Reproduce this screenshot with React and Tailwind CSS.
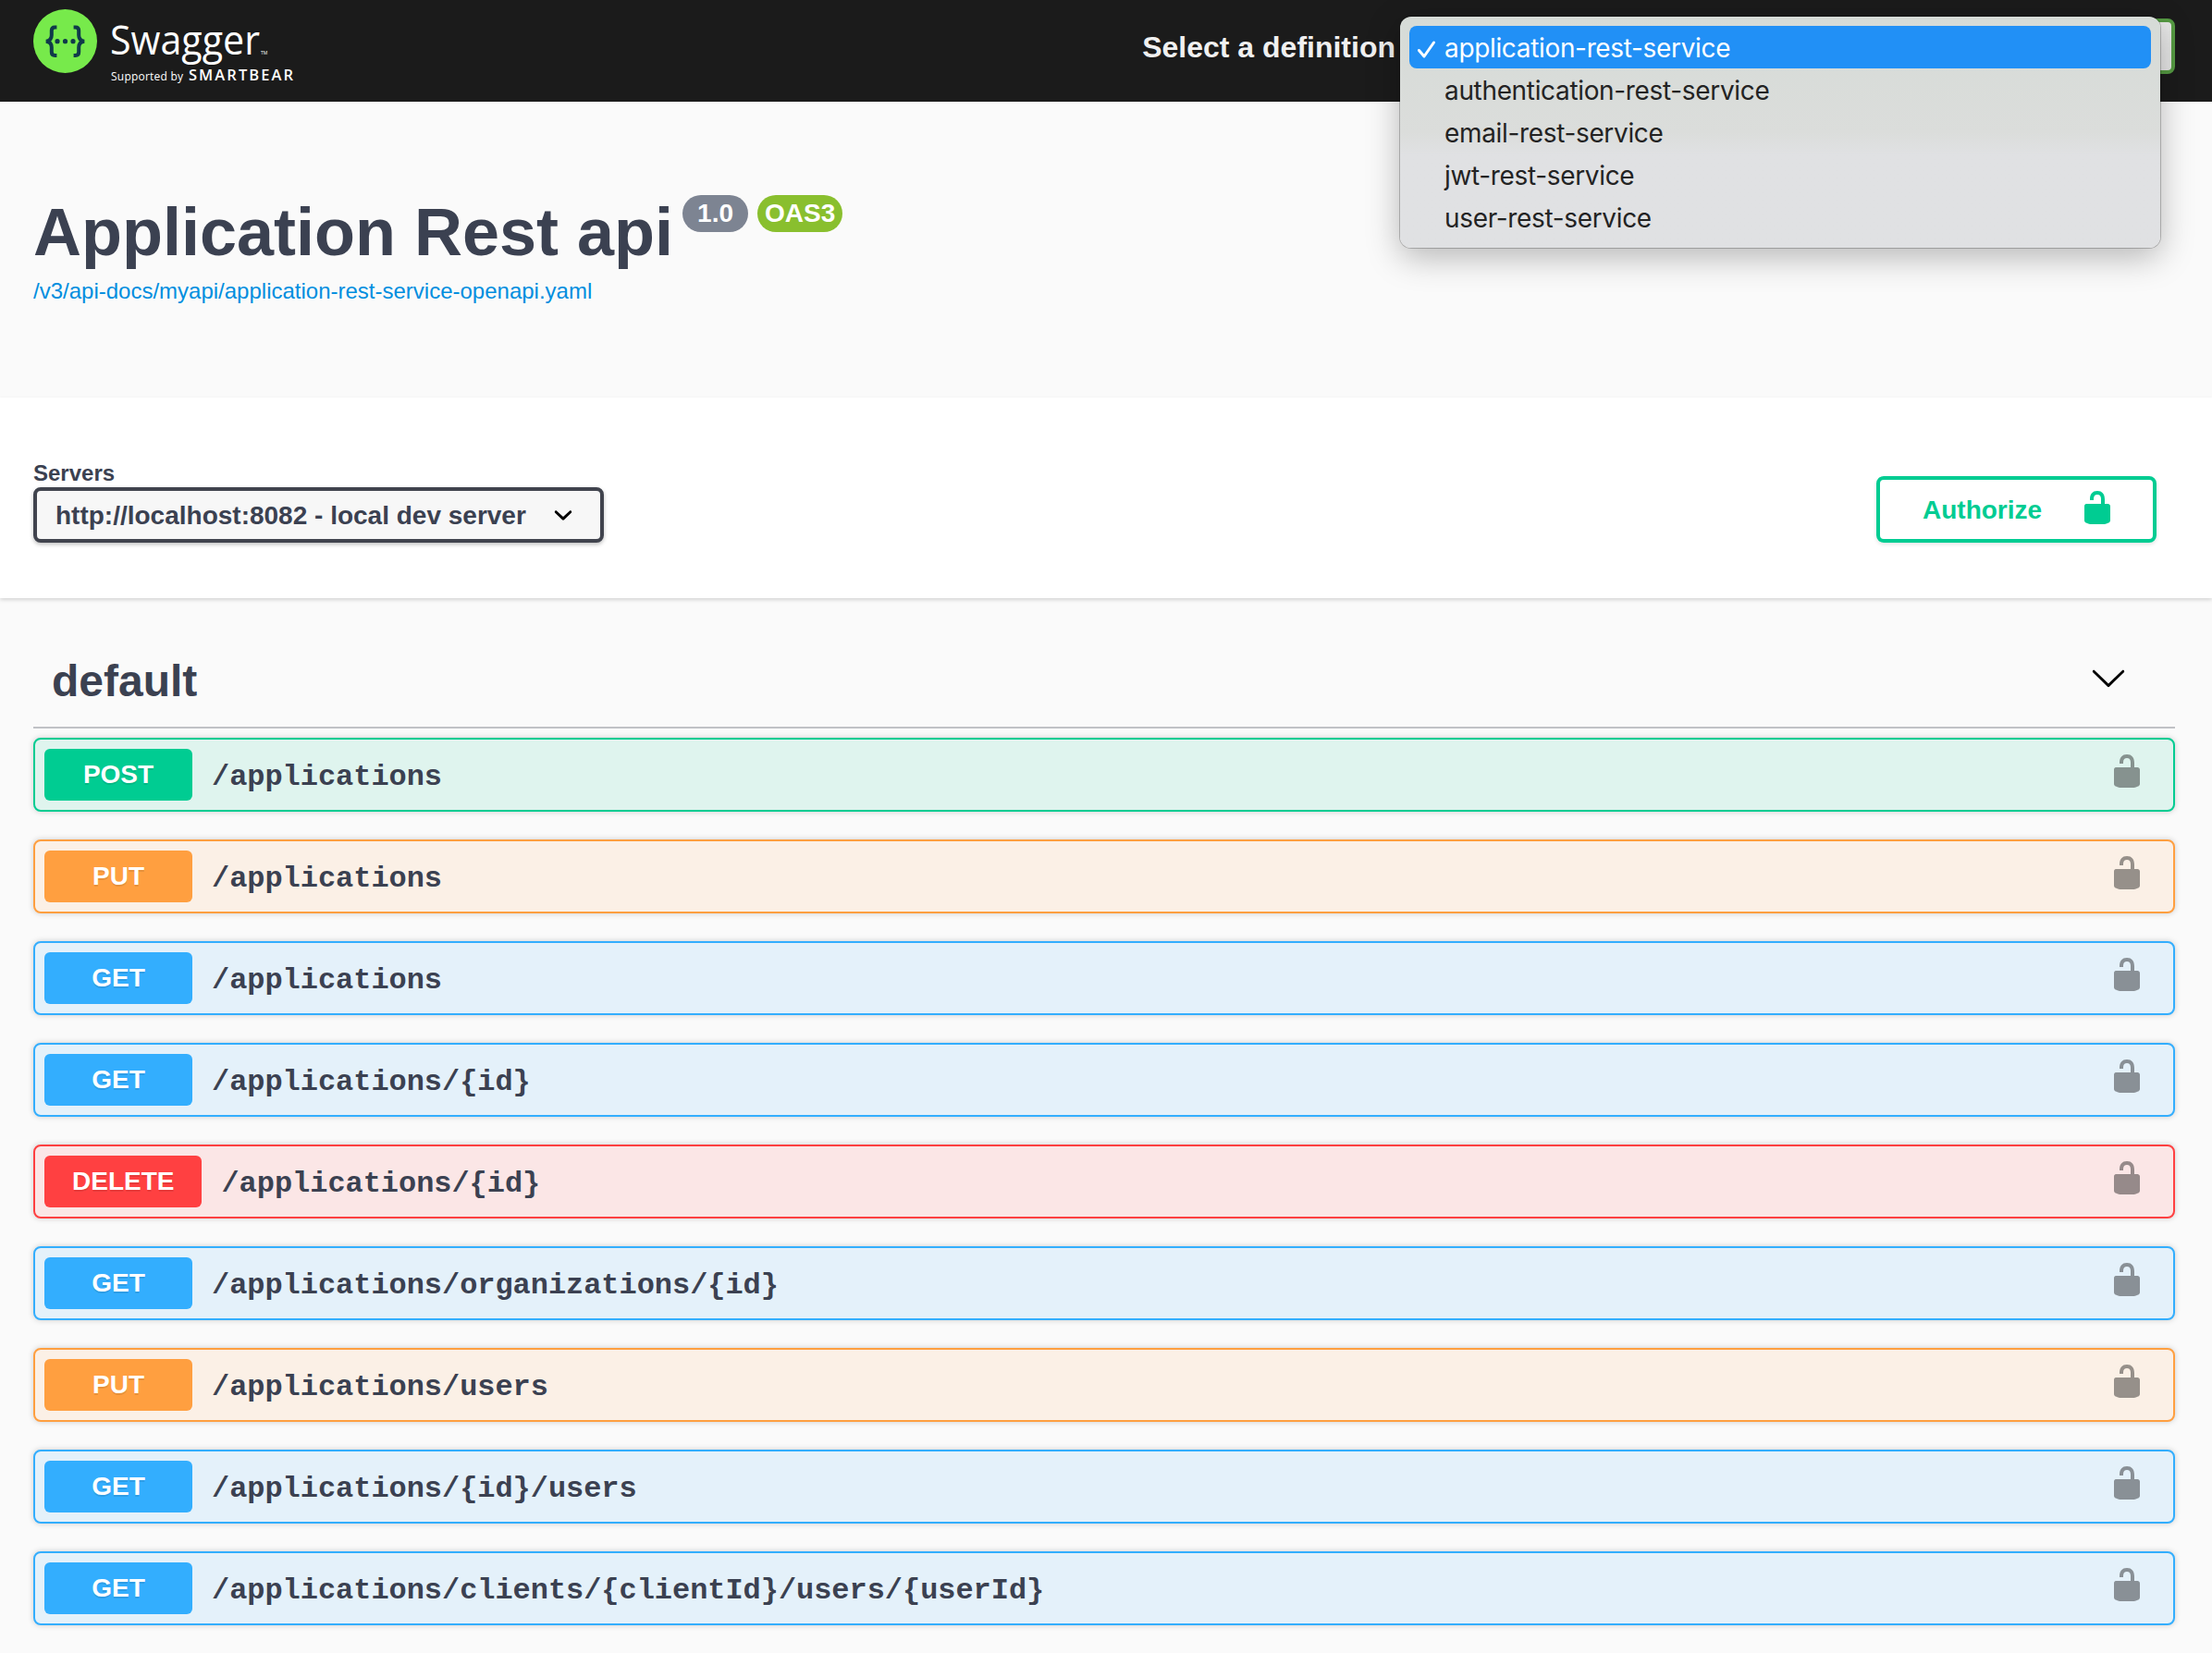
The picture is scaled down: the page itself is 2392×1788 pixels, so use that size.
import React from "react";

const METHODS = {
  POST: { row: "border-[#00cc92] bg-[#dff4ee]", badge: "bg-[#00cc92]" },
  PUT: { row: "border-[#ff9f40] bg-[#fbf0e6]", badge: "bg-[#ff9f40]" },
  GET: { row: "border-[#33aefe] bg-[#e4f1fa]", badge: "bg-[#33aefe]" },
  DELETE: { row: "border-[#ff4041] bg-[#fbe6e6]", badge: "bg-[#ff4041]" },
};

const OPERATIONS = [
  ["POST", "/applications"],
  ["PUT", "/applications"],
  ["GET", "/applications"],
  ["GET", "/applications/{id}"],
  ["DELETE", "/applications/{id}"],
  ["GET", "/applications/organizations/{id}"],
  ["PUT", "/applications/users"],
  ["GET", "/applications/{id}/users"],
  ["GET", "/applications/clients/{clientId}/users/{userId}"],
];

const DEFINITIONS = [
  "application-rest-service",
  "authentication-rest-service",
  "email-rest-service",
  "jwt-rest-service",
  "user-rest-service",
];

function Unlocked({ className }) {
  return (
    <svg viewBox="0 0 20 20" className={className} fill="currentColor">
      <path d="M15.8 8H14V5.6C14 2.703 12.665 1 10 1 7.334 1 6 2.703 6 5.6V6h2v-.801C8 3.754 8.797 3 10 3c1.203 0 2 .754 2 2.199V8H4c-.553 0-1 .646-1 1.199V17c0 .549.428 1.139.951 1.307l1.197.387C5.672 18.861 6.55 19 7.1 19h5.8c.549 0 1.428-.139 1.951-.307l1.196-.387c.524-.167.953-.757.953-1.306V9.199C17 8.646 16.352 8 15.8 8z" />
    </svg>
  );
}

function Logo() {
  return (
    <svg width="290" height="90" viewBox="0 0 290 90" className="block">
      <circle cx="34.5" cy="34.5" r="34.5" fill="#77ea4b" />
      <g fill="none" stroke="#103a4a" strokeWidth="4">
        <path d="M25.4 19.5h-2q-3.6 0-3.6 3.6v5q0 6-6 6.6q6 .6 6 6.6v5q0 3.6 3.6 3.6h2" />
        <path d="M43.6 19.5h2q3.6 0 3.6 3.6v5q0 6 6 6.6q-6 .6-6 6.6v5q0 3.6-3.6 3.6h-2" />
      </g>
      <g fill="#103a4a">
        <circle cx="26" cy="34.7" r="2.6" />
        <circle cx="34.5" cy="34.7" r="2.6" />
        <circle cx="43" cy="34.7" r="2.6" />
      </g>
      <g fill="#ffffff" fontFamily='"Open Sans", sans-serif'>
        <text x="83" y="49.3" fontSize="44" fontWeight="400" textLength="162" lengthAdjust="spacingAndGlyphs">Swagger</text>
        <text x="246" y="49" fontSize="5">TM</text>
        <text x="84" y="77" fontSize="12" textLength="78" lengthAdjust="spacing">Supported by</text>
        <text x="168" y="77" fontSize="16.5" fontWeight="600" textLength="113" lengthAdjust="spacing">SMARTBEAR</text>
      </g>
    </svg>
  );
}

function DefinitionMenu() {
  return (
    <ul className="absolute -left-[6px] -top-[6px] z-10 w-[822px] h-[250px] rounded-xl p-2.5 bg-linear-to-b from-[#d6dbd7] via-[#dbdddb] via-50% to-[#e0e1e3] to-60% font-['Inter','Roboto',sans-serif] text-[28px] leading-[46px] text-[#232323] shadow-[0_0_0_1px_rgba(0,0,0,0.22),0_10px_36px_rgba(0,0,0,0.28)]">
      {DEFINITIONS.map((name, i) => (
        <li
          key={name}
          className={
            i === 0
              ? "flex h-[46px] items-center rounded-lg bg-[#2190f6] text-white"
              : "flex h-[46px] items-center"
          }
        >
          <span className="flex w-[38px] shrink-0 pl-[9px] pt-1">
            {i === 0 && (
              <svg width="20" height="20" viewBox="0 0 20 20" fill="none" stroke="white" strokeWidth="3" strokeLinecap="round" strokeLinejoin="round">
                <path d="M1.5 11.5 7 18 17.500 3" />
              </svg>
            )}
          </span>
          <span className="whitespace-nowrap pt-0.5 tracking-[-0.34px]">{name}</span>
        </li>
      ))}
    </ul>
  );
}

function TopBar() {
  return (
    <header className="flex h-[110px] items-start justify-between bg-[#1b1b1b] pl-9 pr-10">
      <div className="pt-[10px]">
        <Logo />
      </div>
      <div className="flex pt-5">
        <span className="mr-[7px] pt-px text-[32px] leading-[60px] font-bold text-[#f0f0f0] whitespace-nowrap">
          Select a definition
        </span>
        <div className="relative h-[60px] w-[836px] rounded-lg border-4 border-[#569b43] bg-[#e8e8e8]">
          <DefinitionMenu />
        </div>
      </div>
    </header>
  );
}

function Info() {
  return (
    <section className="h-[320px] pl-9 pt-[101px]">
      <h2 className="flex items-start text-[72px] leading-[80px] font-bold">
        <span className="whitespace-nowrap">Application Rest api</span>
        <span className="ml-2.5 flex gap-2.5 text-[28px] leading-10 text-white">
          <span className="h-10 rounded-full bg-[#7d8492] px-4">1.0</span>
          <span className="h-10 rounded-full bg-[#89bf2e] px-2">OAS3</span>
        </span>
      </h2>
      <a className="block pt-[10px] text-[24px] leading-7 text-[#008edf]">
        /v3/api-docs/myapi/application-rest-service-openapi.yaml
      </a>
    </section>
  );
}

function SchemeBar() {
  return (
    <section className="flex h-[217px] items-start justify-between bg-white pl-9 pr-[60px] shadow-[0_2px_4px_rgba(0,0,0,0.15)]">
      <div className="pt-[68px]">
        <div className="h-[29px] text-[24px] leading-7 font-bold">Servers</div>
        <div className="flex h-[60px] w-[617px] items-center justify-between rounded-lg border-4 border-[#41444e] bg-[#f7f7f7] pl-5 pr-5 text-[28px] font-bold shadow-[0_2px_4px_rgba(0,0,0,0.25)]">
          <span className="whitespace-nowrap pt-px">http://localhost:8082 - local dev server</span>
          <svg viewBox="0 0 20 20" className="size-10 text-black" fill="currentColor">
            <path d="M13.418 7.859c.271-.268.709-.268.978 0 .27.268.272.701 0 .969l-3.908 3.830c-.27.268-.707.268-.979 0l-3.908-3.830c-.27-.267-.27-.701 0-.969.271-.268.709-.268.978 0L10 11l3.418-3.141z" />
          </svg>
        </div>
      </div>
      <button className="mt-[85px] flex h-[72px] w-[303px] items-start rounded-lg border-4 border-[#00cc92] pl-[46px] text-[28px] font-bold text-[#00cc92] shadow-[0_2px_4px_rgba(0,0,0,0.1)]">
        <span className="w-[169px] pt-px text-left leading-[64px]">Authorize</span>
        <Unlocked className="mt-[10px] size-10" />
      </button>
    </section>
  );
}

function Operation({ method, path }) {
  const style = METHODS[method];
  return (
    <div className={`flex h-20 items-center rounded-lg border-2 pl-2.5 pr-[30px] shadow-[0_0_6px_rgba(0,0,0,0.19)] ${style.row}`}>
      <span className={`h-14 min-w-40 rounded-md px-[30px] text-center text-[28px] leading-14 font-bold text-white [text-shadow:0_2px_0_rgba(0,0,0,0.1)] ${style.badge}`}>
        {method}
      </span>
      <span className="flex-1 pl-[21px] pt-1.5 font-['Liberation_Mono',monospace] text-[32px] font-bold tracking-[-0.05px] whitespace-nowrap">
        {path}
      </span>
      <Unlocked className="mb-2 size-10 text-black/40" />
    </div>
  );
}

export default function App() {
  return (
    <div className="h-[1788px] w-full overflow-hidden bg-[#fafafa] font-['Liberation_Sans',Arial,sans-serif] text-[#3b4151]">
      <TopBar />
      <Info />
      <SchemeBar />
      <main className="pl-9 pr-10 pt-[40px]">
        <div className="mb-2.5 flex h-[101px] items-start justify-between border-b-2 border-[rgba(59,65,81,0.3)] pl-5 pr-[52px]">
          <h3 className="pt-[22px] text-[48px] leading-[56px] font-bold">default</h3>
          <svg viewBox="0 0 20 20" className="mt-[26px] size-10 text-black" fill="currentColor">
            <path d="M17.418 6.109c.272-.268.709-.268.979 0s.271.701 0 .969l-7.908 7.830c-.27.268-.707.268-.979 0l-7.908-7.830c-.27-.268-.27-.701 0-.969.271-.268.709-.268.979 0L10 13.250l7.418-7.141z" />
          </svg>
        </div>
        <div className="flex flex-col gap-[30px]">
          {OPERATIONS.map(([method, path], i) => (
            <Operation key={i} method={method} path={path} />
          ))}
        </div>
      </main>
    </div>
  );
}
